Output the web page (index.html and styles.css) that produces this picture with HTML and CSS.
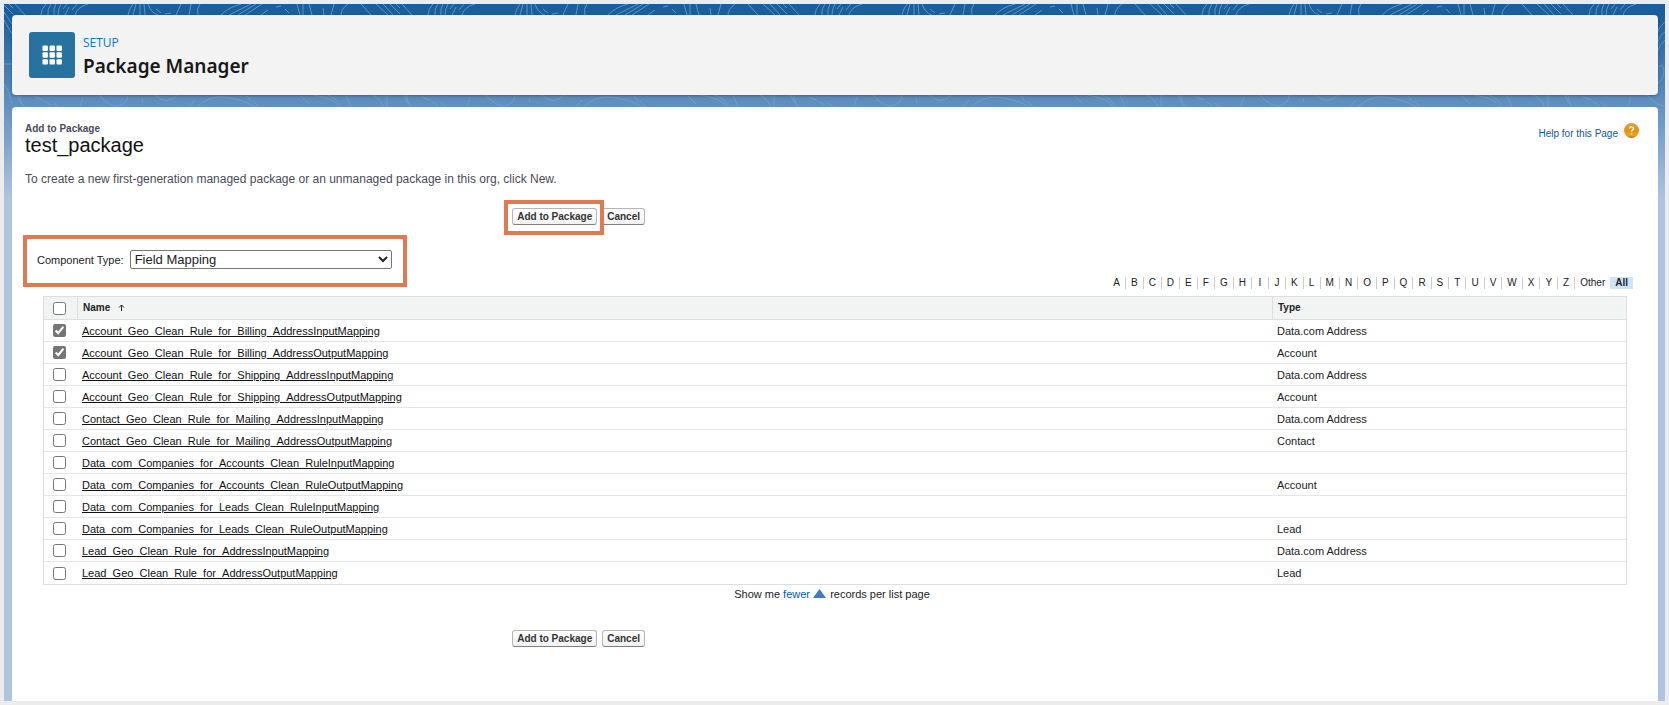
FILE: index.html
```html
<!DOCTYPE html>
<html lang="en">
<head>
<meta charset="utf-8">
<title>Package Manager</title>
<link rel="stylesheet" href="styles.css">
</head>
<body>
<div class="frame">
  <svg class="contours" aria-hidden="true">
    <defs>
      <linearGradient id="fade" x1="0" y1="0" x2="0" y2="1">
        <stop offset="0" stop-color="#fff"/>
        <stop offset="1" stop-color="#fff" stop-opacity="0"/>
      </linearGradient>
      <mask id="fadeMask"><rect width="100%" height="190" fill="url(#fade)"/></mask>
      <pattern id="topo" x="9" width="387" height="200" patternUnits="userSpaceOnUse">
        <g fill="none" stroke="#9cc3e8" stroke-width="1">
          <path d="M2 0 12 11M-10 0 0 11M33 0Q28 5 28 11M38 0Q34 5 35 11M43 0Q40 5 41 11M48 0Q45 5 45 11M54 0 50 5M52 11 56 3M75 0Q64 3 62 11M64 0 59 6"/>
          <path d="M120 0Q116 5 115 11M123 0 120 11M127 0V11M131 0 132 11M135 0Q138 9 145 11M143 5 148 9M152 10 158 9M168 0 163 11M178 0 176 11M187 0Q183 5 185 11"/>
          <path d="M228 0Q216 3 208 11M238 0 216 11M243 0 225 11M249 0 232 11M248 11 255 6M263 3 268 2M272 5 276 9M284 0 287 11M290 0V11M296 0 299 11M310 4 311 11M321 0 318 11M335 0Q328 5 328 11"/>
          <path d="M348 0 358 11M363 0 375 11M370 0 380 11M377 0 388 11M383 0 394 11"/>
          <path d="M7 91Q7 99 12 103M22 93 30 96M32 98 38 101M41 99 46 103M70 93 67 102M86 91Q98 105 108 101Q115 98 115 91M129 94 130 99M142 91Q154 102 164 91M182 96 176 103"/>
          <path d="M184 103Q194 93 207 93Q228 94 242 103M234 92 238 97M240 97 246 103M288 92 296 100M300 91Q322 94 326 103M315 91Q325 95 328 103M333 91 338 103M360 91Q370 97 370 103M374 91V103M391 91Q393 99 399 103M4 91Q6 99 12 103"/>
        </g>
      </pattern>
    </defs>
    <g mask="url(#fadeMask)">
      <rect width="100%" height="190" fill="url(#topo)"/>
      <path class="edge" d="M0 8 8 20M0 16 8 30M0 60H8M0 80Q6 88 8 100M0 115Q6 120 8 135M0 150Q9 155 8 164Q6 172 0 170"/>
      <svg x="100%" overflow="visible"><path class="edge" d="M-8 30Q-6 22 0 18M-8 40Q-5 30 0 28M-8 48Q-5 40 0 36M-8 64Q-2 58-1 66Q-1 76-8 80M-8 132Q0 145-2 160"/></svg>
    </g>
  </svg>

  <header class="page-header">
    <svg class="app-icon" viewBox="0 0 46 46" aria-hidden="true">
      <rect width="46" height="46" rx="3" fill="#27729e"/>
      <g fill="#fff">
        <rect x="13.5" y="13.5" width="5.4" height="5.4" rx="1"/><rect x="20.5" y="13.5" width="5.4" height="5.4" rx="1"/><rect x="27.5" y="13.5" width="5.4" height="5.4" rx="1"/>
        <rect x="13.5" y="20.3" width="5.4" height="5.4" rx="1"/><rect x="20.5" y="20.3" width="5.4" height="5.4" rx="1"/><rect x="27.5" y="20.3" width="5.4" height="5.4" rx="1"/>
        <rect x="13.5" y="27.2" width="5.4" height="5.4" rx="1"/><rect x="20.5" y="27.2" width="5.4" height="5.4" rx="1"/><rect x="27.5" y="27.2" width="5.4" height="5.4" rx="1"/>
      </g>
    </svg>
    <div>
      <p class="eyebrow">SETUP</p>
      <h1 class="app-title">Package Manager</h1>
    </div>
  </header>

  <main class="content">
    <div class="title-row">
      <div>
        <p class="page-kind">Add to Package</p>
        <h2 class="page-name">test_package</h2>
      </div>
      <a class="help" href="#">Help for this Page
        <svg class="help-icon" viewBox="0 0 15 15" aria-hidden="true">
          <defs><linearGradient id="ball" x1="0" y1="0" x2="0" y2="1"><stop offset="0" stop-color="#d9a04a"/><stop offset=".5" stop-color="#e8920f"/><stop offset=".85" stop-color="#f0a01c"/><stop offset="1" stop-color="#a5660c"/></linearGradient></defs>
          <circle cx="7.5" cy="7.5" r="7.5" fill="url(#ball)"/>
          <path d="M5.4 5.6Q5.6 3.9 7.5 3.9Q9.5 4 9.5 5.6Q9.4 6.6 8.3 7.2Q7.5 7.7 7.5 8.8" fill="none" stroke="#fff" stroke-width="1.4"/>
          <circle cx="7.5" cy="10.8" r=".9" fill="#fff"/>
        </svg>
      </a>
    </div>
    <p class="intro">To create a new first-generation managed package or an unmanaged package in this org, click New.</p>

    <div class="actions">
      <span class="callout"><button class="btn" type="button">Add to Package</button></span>
      <button class="btn" type="button">Cancel</button>
    </div>

    <div class="component-type">
      <label for="ctype">Component Type:</label>
      <select id="ctype" class="type-select"><option>Field Mapping</option></select>
    </div>

    <nav class="rolodex" aria-label="Filter by letter">
      <a href="#">A</a><a href="#">B</a><a href="#">C</a><a href="#">D</a><a href="#">E</a><a href="#">F</a><a href="#">G</a><a href="#">H</a><a href="#">I</a><a href="#">J</a><a href="#">K</a><a href="#">L</a><a href="#">M</a><a href="#">N</a><a href="#">O</a><a href="#">P</a><a href="#">Q</a><a href="#">R</a><a href="#">S</a><a href="#">T</a><a href="#">U</a><a href="#">V</a><a href="#">W</a><a href="#">X</a><a href="#">Y</a><a href="#">Z</a><a class="other" href="#">Other</a><a class="all" href="#">All</a>
    </nav>

    <table class="list">
      <thead>
        <tr>
          <th class="check"><input type="checkbox" aria-label="Select all"></th>
          <th class="name">Name <svg class="sort" viewBox="0 0 7 7" aria-hidden="true"><path d="M3.5 7V1M1 3.5 3.5 1 6 3.5" fill="none" stroke="#222"/></svg></th>
          <th class="type">Type</th>
        </tr>
      </thead>
      <tbody>
        <tr><td class="check"><input type="checkbox" aria-labelledby="r1" checked></td><td><a id="r1" href="#">Account_Geo_Clean_Rule_for_Billing_AddressInputMapping</a></td><td>Data.com Address</td></tr>
        <tr><td class="check"><input type="checkbox" aria-labelledby="r2" checked></td><td><a id="r2" href="#">Account_Geo_Clean_Rule_for_Billing_AddressOutputMapping</a></td><td>Account</td></tr>
        <tr><td class="check"><input type="checkbox" aria-labelledby="r3"></td><td><a id="r3" href="#">Account_Geo_Clean_Rule_for_Shipping_AddressInputMapping</a></td><td>Data.com Address</td></tr>
        <tr><td class="check"><input type="checkbox" aria-labelledby="r4"></td><td><a id="r4" href="#">Account_Geo_Clean_Rule_for_Shipping_AddressOutputMapping</a></td><td>Account</td></tr>
        <tr><td class="check"><input type="checkbox" aria-labelledby="r5"></td><td><a id="r5" href="#">Contact_Geo_Clean_Rule_for_Mailing_AddressInputMapping</a></td><td>Data.com Address</td></tr>
        <tr><td class="check"><input type="checkbox" aria-labelledby="r6"></td><td><a id="r6" href="#">Contact_Geo_Clean_Rule_for_Mailing_AddressOutputMapping</a></td><td>Contact</td></tr>
        <tr><td class="check"><input type="checkbox" aria-labelledby="r7"></td><td><a id="r7" href="#">Data_com_Companies_for_Accounts_Clean_RuleInputMapping</a></td><td></td></tr>
        <tr><td class="check"><input type="checkbox" aria-labelledby="r8"></td><td><a id="r8" href="#">Data_com_Companies_for_Accounts_Clean_RuleOutputMapping</a></td><td>Account</td></tr>
        <tr><td class="check"><input type="checkbox" aria-labelledby="r9"></td><td><a id="r9" href="#">Data_com_Companies_for_Leads_Clean_RuleInputMapping</a></td><td></td></tr>
        <tr><td class="check"><input type="checkbox" aria-labelledby="r10"></td><td><a id="r10" href="#">Data_com_Companies_for_Leads_Clean_RuleOutputMapping</a></td><td>Lead</td></tr>
        <tr><td class="check"><input type="checkbox" aria-labelledby="r11"></td><td><a id="r11" href="#">Lead_Geo_Clean_Rule_for_AddressInputMapping</a></td><td>Data.com Address</td></tr>
        <tr><td class="check"><input type="checkbox" aria-labelledby="r12"></td><td><a id="r12" href="#">Lead_Geo_Clean_Rule_for_AddressOutputMapping</a></td><td>Lead</td></tr>
      </tbody>
    </table>

    <p class="pager">Show me <a href="#">fewer <svg class="tri" viewBox="0 0 13 9" aria-hidden="true"><path d="M6.5 0 13 9H0Z" fill="#3f78c4"/></svg></a> records per list page</p>

    <div class="actions">
      <button class="btn" type="button">Add to Package</button>
      <button class="btn" type="button">Cancel</button>
    </div>
  </main>
</div>
</body>
</html>
```
FILE: styles.css
```css
* { box-sizing: border-box; }

body {
  margin: 0;
  padding: 4px;
  background: #ececec;
  color: #222;
  font-family: "Liberation Sans", Arial, sans-serif;
  font-size: 11px;
  line-height: 14px;
}

p, h1, h2 { margin: 0; }
a { color: #015ba7; text-decoration: none; }

.frame {
  position: relative;
  display: flex;
  flex-direction: column;
  gap: 12px;
  min-height: calc(100vh - 8px);
  padding: 11px 7px 0 8px;
  background: #b0c4df linear-gradient(#195e9f 0, #1b5f9f 14px, #5a8bbd 92px, #b0c4df 196px) no-repeat;
}

.contours {
  position: absolute;
  inset: 0;
  width: 100%;
  height: 190px;
  opacity: 0.55;
}
.edge { fill: none; stroke: #9cc3e8; }

.page-header {
  position: relative;
  display: flex;
  align-items: flex-start;
  gap: 8px;
  height: 80px;
  padding: 17px;
  border-radius: 4px;
  background: #f3f3f3;
  box-shadow: 0 1px 3px rgba(0, 0, 0, 0.3);
}
.app-icon { width: 46px; height: 46px; }
.eyebrow {
  margin-top: 1px;
  color: #0b74cc;
  font: 12px/20px "Open Sans", sans-serif;
}
.app-title {
  color: #181818;
  font: 600 19px/26px "Noto Sans", sans-serif;
}

.content {
  position: relative;
  flex: 1;
  padding: 15px 19px 0 13px;
  border-radius: 4px 4px 0 0;
  background: #fff;
}

.title-row {
  display: flex;
  justify-content: space-between;
  align-items: flex-start;
}
.page-kind { color: #4a4a56; font-size: 10px; font-weight: bold; }
.page-name { color: #111; font-size: 20px; line-height: 19px; font-weight: normal; }
.help {
  display: flex;
  align-items: flex-end;
  gap: 6px;
  padding-top: 1px;
  font-size: 10px;
}
.help-icon { width: 15px; height: 15px; margin-bottom: 3px; }

.intro { margin-top: 16px; color: #4a4a56; font-size: 12px; line-height: 16px; }

.actions {
  display: flex;
  gap: 5px;
  margin-top: 21px;
  padding-left: calc(30% + 3px);
}
.btn {
  display: block;
  height: 17px;
  padding: 0 4px;
  border: 1px solid #b5b5b5;
  border-bottom-color: #7f7f7f;
  border-radius: 3px;
  background: linear-gradient(#fff, #f2f2f2);
  color: #333;
  font: bold 10px/14px "Liberation Sans", Arial, sans-serif;
}
.callout { position: relative; z-index: 1; }
.callout::after {
  content: "";
  position: absolute;
  inset: -8px -7px -10px -8px;
  border: 4px solid #e07a52;
  box-shadow: inset 0 0 0 2px #fff;
  pointer-events: none;
}

.component-type {
  display: flex;
  align-items: flex-start;
  gap: 6px;
  width: fit-content;
  height: 52px;
  margin: 10px 0 0 -2px;
  padding: 11px 11px 0 10px;
  border: 4px solid #e07a52;
  line-height: 20px;
}
.type-select {
  width: 262px;
  height: 19px;
  padding: 0;
  border: 1px solid #767676;
  border-radius: 2px;
  background: #fff;
  color: #222;
  font: 13px "Liberation Sans", Arial, sans-serif;
}

.rolodex {
  display: flex;
  justify-content: flex-end;
  margin-top: -10px;
  padding-right: 6px;
  font-size: 10px;
  line-height: 12px;
}
.rolodex a {
  min-width: 17px;
  padding: 0 5px;
  border-right: 1px solid #ccc;
  color: #222;
  text-align: center;
}
.rolodex .other { border: 0; }
.rolodex .all { border: 0; background: #cfe3fb; font-weight: bold; }

.list {
  width: calc(100% - 30px);
  margin: 7px 0 0 18px;
  border: 1px solid #dcdfde;
  border-collapse: separate;
  border-spacing: 0;
  table-layout: fixed;
}
.list th {
  height: 23px;
  padding: 0 0 1px 5px;
  border-bottom: 1px solid #dcdfde;
  background: #f1f4f3;
  font-size: 10px;
  text-align: left;
}
.list th + th { border-left: 1px solid #dcdfde; }
.list td {
  height: 22px;
  padding: 0 0 0 5px;
  border-bottom: 1px solid #e4e6e5;
}
.list tr:last-child td { border-bottom: 0; }
.list tbody a { color: #111; text-decoration: underline; }
.list .check { width: 33px; padding: 0 0 0 9px; }
.list .type { width: 354px; }
.list input { display: block; width: 13px; height: 13px; margin: 0; accent-color: #757575; }
.sort { width: 7px; height: 7px; margin-left: 5px; }

.pager { margin-top: 2px; text-align: center; }
.tri { width: 13px; height: 9px; margin-right: 1px; }
.pager + .actions { margin-top: 29px; }
```
